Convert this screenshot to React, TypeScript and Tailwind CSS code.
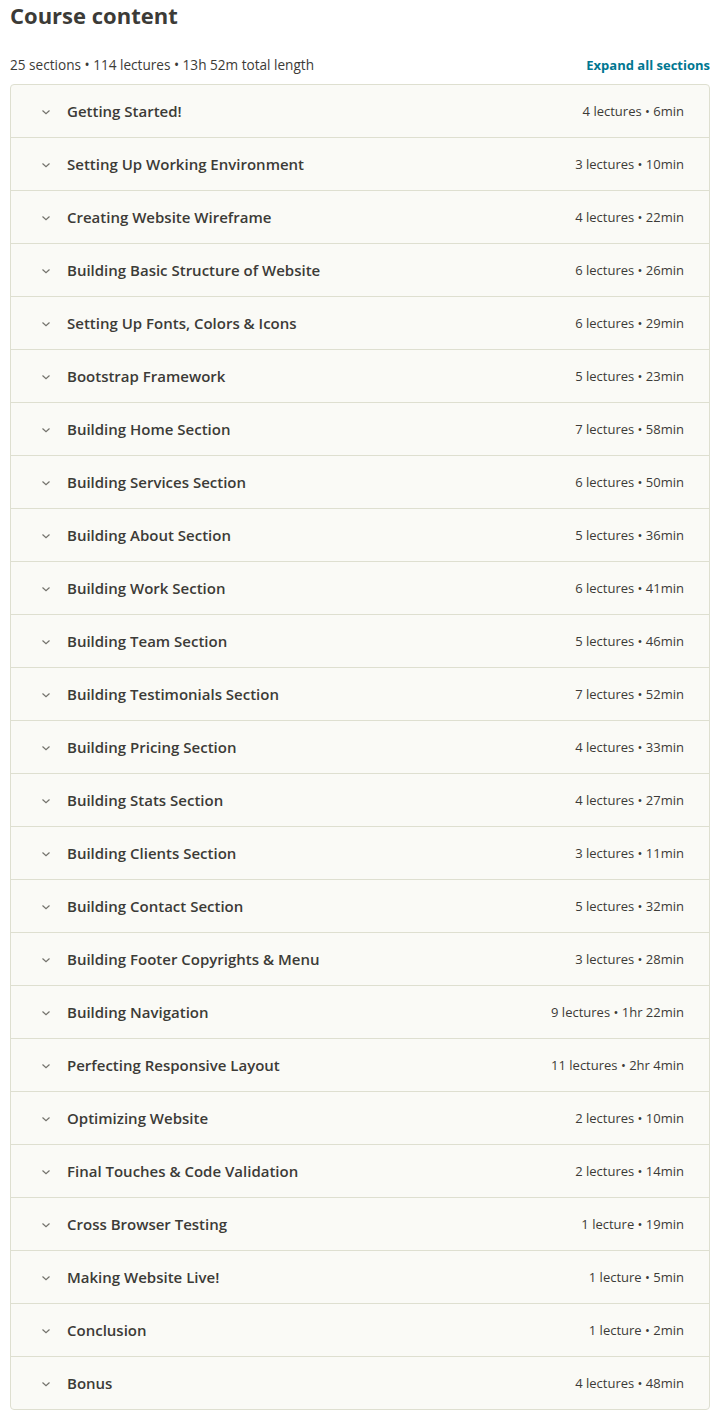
import React from "react";

const sections: [string, string][] = [
  ["Getting Started!", "4 lectures • 6min"],
  ["Setting Up Working Environment", "3 lectures • 10min"],
  ["Creating Website Wireframe", "4 lectures • 22min"],
  ["Building Basic Structure of Website", "6 lectures • 26min"],
  ["Setting Up Fonts, Colors & Icons", "6 lectures • 29min"],
  ["Bootstrap Framework", "5 lectures • 23min"],
  ["Building Home Section", "7 lectures • 58min"],
  ["Building Services Section", "6 lectures • 50min"],
  ["Building About Section", "5 lectures • 36min"],
  ["Building Work Section", "6 lectures • 41min"],
  ["Building Team Section", "5 lectures • 46min"],
  ["Building Testimonials Section", "7 lectures • 52min"],
  ["Building Pricing Section", "4 lectures • 33min"],
  ["Building Stats Section", "4 lectures • 27min"],
  ["Building Clients Section", "3 lectures • 11min"],
  ["Building Contact Section", "5 lectures • 32min"],
  ["Building Footer Copyrights & Menu", "3 lectures • 28min"],
  ["Building Navigation", "9 lectures • 1hr 22min"],
  ["Perfecting Responsive Layout", "11 lectures • 2hr 4min"],
  ["Optimizing Website", "2 lectures • 10min"],
  ["Final Touches & Code Validation", "2 lectures • 14min"],
  ["Cross Browser Testing", "1 lecture • 19min"],
  ["Making Website Live!", "1 lecture • 5min"],
  ["Conclusion", "1 lecture • 2min"],
  ["Bonus", "4 lectures • 48min"],
];

function Chevron() {
  return (
    <svg width="10" height="6" viewBox="0 0 10 6" fill="none" className="shrink-0">
      <path d="M1.5 1.5l3.5 3.2 3.5-3.2" stroke="#73726c" strokeWidth="1.2" />
    </svg>
  );
}

export default function App() {
  return (
    <div className="w-[710px] bg-white text-[#3c3b37]" style={{ fontFamily: "'Open Sans', 'Noto Sans', sans-serif" }}>
      <h2 className="pl-[10px] text-[22px] font-bold leading-[31px] text-[#3c3b37]">Course content</h2>
      <div className="flex items-center justify-between pl-[10px] pt-[25px] pb-[10px]">
        <span className="text-[13.6px] leading-[18px] text-[#3c3b37]">25 sections • 114 lectures • 13h 52m total length</span>
        <span className="text-[13px] font-bold leading-[18px] text-[#007791]">Expand all sections</span>
      </div>
      <div className="ml-[10px] overflow-hidden rounded-[4px] border border-[#dedfd0] bg-[#fafaf6]">
        {sections.map(([title, info], i) => (
          <div
            key={title}
            className={`flex items-center pl-[30px] pr-[25px] pt-px ${i > 0 ? "h-[53px] border-t border-[#dedfd0]" : "h-[52px]"}`}
          >
            <Chevron />
            <span className="ml-[16px] flex-1 text-[15px] font-semibold text-[#3c3b37]">{title}</span>
            <span className="text-[13px] text-[#3c3b37]">{info}</span>
          </div>
        ))}
      </div>
    </div>
  );
}
